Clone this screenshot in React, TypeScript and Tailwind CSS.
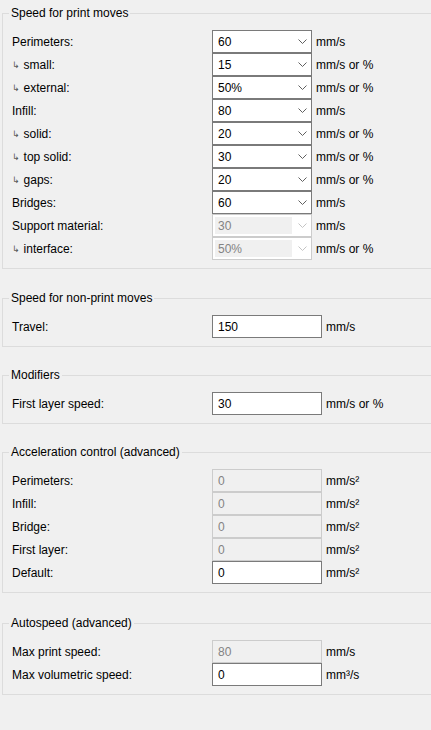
import type { ReactNode } from "react";

type Row = {
  label: string;
  sub?: boolean;
  value: string;
  unit: string;
  kind: "combo" | "text";
  disabled?: boolean;
};

const printMoves: Row[] = [
  { label: "Perimeters:", value: "60", unit: "mm/s", kind: "combo" },
  { label: "small:", sub: true, value: "15", unit: "mm/s or %", kind: "combo" },
  { label: "external:", sub: true, value: "50%", unit: "mm/s or %", kind: "combo" },
  { label: "Infill:", value: "80", unit: "mm/s", kind: "combo" },
  { label: "solid:", sub: true, value: "20", unit: "mm/s or %", kind: "combo" },
  { label: "top solid:", sub: true, value: "30", unit: "mm/s or %", kind: "combo" },
  { label: "gaps:", sub: true, value: "20", unit: "mm/s or %", kind: "combo" },
  { label: "Bridges:", value: "60", unit: "mm/s", kind: "combo" },
  { label: "Support material:", value: "30", unit: "mm/s", kind: "combo", disabled: true },
  { label: "interface:", sub: true, value: "50%", unit: "mm/s or %", kind: "combo", disabled: true },
];

const nonPrint: Row[] = [{ label: "Travel:", value: "150", unit: "mm/s", kind: "text" }];

const modifiers: Row[] = [
  { label: "First layer speed:", value: "30", unit: "mm/s or %", kind: "text" },
];

const acceleration: Row[] = [
  { label: "Perimeters:", value: "0", unit: "mm/s²", kind: "text", disabled: true },
  { label: "Infill:", value: "0", unit: "mm/s²", kind: "text", disabled: true },
  { label: "Bridge:", value: "0", unit: "mm/s²", kind: "text", disabled: true },
  { label: "First layer:", value: "0", unit: "mm/s²", kind: "text", disabled: true },
  { label: "Default:", value: "0", unit: "mm/s²", kind: "text" },
];

const autospeed: Row[] = [
  { label: "Max print speed:", value: "80", unit: "mm/s", kind: "text", disabled: true },
  { label: "Max volumetric speed:", value: "0", unit: "mm³/s", kind: "text" },
];

function Chevron({ disabled }: { disabled?: boolean }) {
  return (
    <svg width="9" height="5" viewBox="0 0 9 5" className="shrink-0">
      <path
        d="M0.5 0.5 L4.5 4.5 L8.5 0.5"
        fill="none"
        stroke={disabled ? "#c4c4c4" : "#606060"}
        strokeWidth="1"
      />
    </svg>
  );
}

function Combo({ value, disabled }: { value: string; disabled?: boolean }) {
  return (
    <div
      className={`flex h-[23px] w-[100px] shrink-0 items-center border bg-white ${
        disabled ? "border-[#cccccc]" : "border-[#7a7a7a]"
      }`}
    >
      {disabled ? (
        <div className="ml-[2px] flex h-[17px] w-[77px] items-center bg-[#f0f0f0] pl-[3px] text-[#838383]">
          {value}
        </div>
      ) : (
        <div className="pl-[5px]">{value}</div>
      )}
      <div className="ml-auto flex pr-[4px]">
        <Chevron disabled={disabled} />
      </div>
    </div>
  );
}

function TextBox({ value, disabled }: { value: string; disabled?: boolean }) {
  return (
    <div
      className={`flex h-[23px] w-[110px] shrink-0 items-center border pl-[5px] ${
        disabled
          ? "border-[#cccccc] bg-[#f0f0f0] text-[#838383]"
          : "border-[#7a7a7a] bg-white"
      }`}
    >
      {value}
    </div>
  );
}

function SettingRow({ row }: { row: Row }) {
  return (
    <div className="flex h-[23px] items-center pl-[3px]">
      <div className="flex w-[200px] shrink-0 items-center">
        {row.sub ? (
          <span
            className="mr-[4px] mt-[2px] text-[9px] leading-none text-[#555]"
            style={{ fontFamily: '"DejaVu Sans", sans-serif' }}
          >
            ↳
          </span>
        ) : null}
        {row.label}
      </div>
      {row.kind === "combo" ? (
        <Combo value={row.value} disabled={row.disabled} />
      ) : (
        <TextBox value={row.value} disabled={row.disabled} />
      )}
      <div className="ml-[4px] whitespace-nowrap">{row.unit}</div>
    </div>
  );
}

function Group({ title, rows, className }: { title: string; rows: Row[]; className?: string }) {
  return (
    <fieldset
      className={`border border-r-0 border-[#dcdcdc] pb-[8px] pl-[6px] ${className ?? ""}`}
    >
      <legend className="px-[2px] leading-[16px]">{title}</legend>
      <div className="pt-[9px]">
        {rows.map((row) => (
          <SettingRow key={title + row.label} row={row} />
        ))}
      </div>
    </fieldset>
  );
}

function Page({ children }: { children: ReactNode }) {
  return (
    <div
      className="min-h-screen w-[431px] overflow-hidden bg-[#f0f0f0] pl-[2px] pt-[5px] text-[12px] text-black"
      style={{ fontFamily: '"Liberation Sans", Arial, sans-serif' }}
    >
      {children}
    </div>
  );
}

export default function App() {
  return (
    <Page>
      <Group title="Speed for print moves" rows={printMoves} />
      <Group title="Speed for non-print moves" rows={nonPrint} className="mt-[21px]" />
      <Group title="Modifiers" rows={modifiers} className="mt-[20px]" />
      <Group title="Acceleration control (advanced)" rows={acceleration} className="mt-[20px]" />
      <Group title="Autospeed (advanced)" rows={autospeed} className="mt-[22px]" />
    </Page>
  );
}
